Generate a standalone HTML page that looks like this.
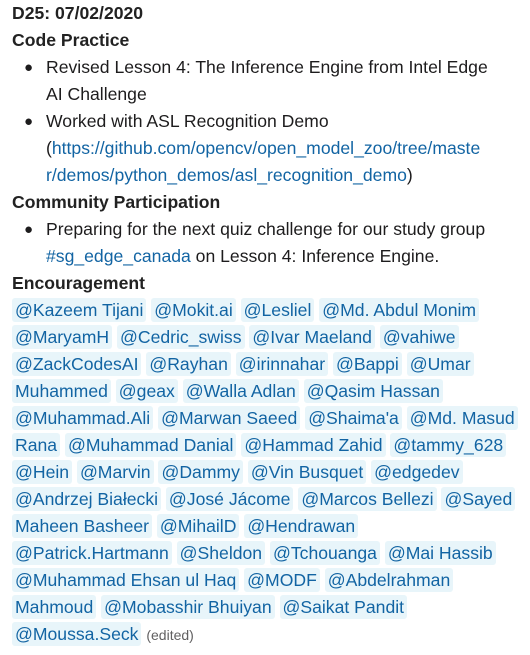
<!DOCTYPE html>
<html><head><meta charset="utf-8"><style>
body{margin:0;background:#fff;font-family:"Liberation Sans",sans-serif;font-size:17.6px;color:#1d1c1d;}
.w{position:absolute;left:12px;top:0;width:518px}
.l{height:27px;line-height:27px;white-space:nowrap}
b{font-weight:bold;color:#222}
.in{padding-left:34px;position:relative}
.in .d{position:absolute;left:12px;top:0;font-size:15px}
a{color:#1264a3;text-decoration:none}
.m{color:#1264a3;background:#e8f5fa;padding:2px 3px;border-radius:3px}
.e{color:#616061;font-size:14px}
</style></head><body><div class="w">
<div class="l"><b>D25: 07/02/2020</b></div>
<div class="l"><b>Code Practice</b></div>
<div class="l in"><span class="d">●</span>Revised Lesson 4: The Inference Engine from Intel Edge</div>
<div class="l in">AI Challenge</div>
<div class="l in"><span class="d">●</span>Worked with ASL Recognition Demo</div>
<div class="l in">(<a>https://github.com/opencv/open_model_zoo/tree/maste</a></div>
<div class="l in"><a>r/demos/python_demos/asl_recognition_demo</a>)</div>
<div class="l"><b>Community Participation</b></div>
<div class="l in"><span class="d">●</span>Preparing for the next quiz challenge for our study group</div>
<div class="l in"><a>#sg_edge_canada</a> on Lesson 4: Inference Engine.</div>
<div class="l"><b>Encouragement</b></div>
<div class="l"><span class="m">@Kazeem Tijani</span> <span class="m">@Mokit.ai</span> <span class="m">@Lesliel</span> <span class="m">@Md. Abdul Monim</span></div>
<div class="l"><span class="m">@MaryamH</span> <span class="m">@Cedric_swiss</span> <span class="m">@Ivar Maeland</span> <span class="m">@vahiwe</span></div>
<div class="l"><span class="m">@ZackCodesAI</span> <span class="m">@Rayhan</span> <span class="m">@irinnahar</span> <span class="m">@Bappi</span> <span class="m">@Umar</span></div>
<div class="l"><span class="m">Muhammed</span> <span class="m">@geax</span> <span class="m">@Walla Adlan</span> <span class="m">@Qasim Hassan</span></div>
<div class="l"><span class="m">@Muhammad.Ali</span> <span class="m">@Marwan Saeed</span> <span class="m">@Shaima'a</span> <span class="m">@Md. Masud</span></div>
<div class="l"><span class="m">Rana</span> <span class="m">@Muhammad Danial</span> <span class="m">@Hammad Zahid</span> <span class="m">@tammy_628</span></div>
<div class="l"><span class="m">@Hein</span> <span class="m">@Marvin</span> <span class="m">@Dammy</span> <span class="m">@Vin Busquet</span> <span class="m">@edgedev</span></div>
<div class="l"><span class="m">@Andrzej Białecki</span> <span class="m">@José Jácome</span> <span class="m">@Marcos Bellezi</span> <span class="m">@Sayed</span></div>
<div class="l"><span class="m">Maheen Basheer</span> <span class="m">@MihailD</span> <span class="m">@Hendrawan</span></div>
<div class="l"><span class="m">@Patrick.Hartmann</span> <span class="m">@Sheldon</span> <span class="m">@Tchouanga</span> <span class="m">@Mai Hassib</span></div>
<div class="l"><span class="m">@Muhammad Ehsan ul Haq</span> <span class="m">@MODF</span> <span class="m">@Abdelrahman</span></div>
<div class="l"><span class="m">Mahmoud</span> <span class="m">@Mobasshir Bhuiyan</span> <span class="m">@Saikat Pandit</span></div>
<div class="l"><span class="m">@Moussa.Seck</span> <span class="e">(edited)</span></div>
</div></body></html>
